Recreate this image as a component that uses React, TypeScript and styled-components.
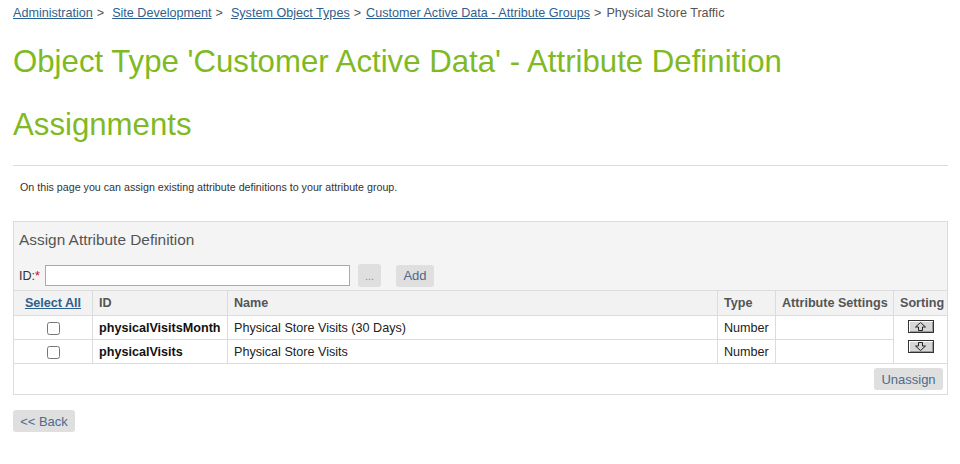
import React from "react";
import styled, { createGlobalStyle } from "styled-components";

const Global = createGlobalStyle`
  html, body { margin: 0; padding: 0; background: #fff; }
  body { font-family: "Liberation Sans", Arial, sans-serif; color: #333; }
`;

const Page = styled.div`
  padding: 0 12px 0 13px;
`;

const Breadcrumb = styled.div`
  height: 30px;
  padding-top: 6px;
  box-sizing: border-box;
  font-size: 12.6px;
  line-height: 15px;
  color: #555;
  white-space: nowrap;
`;

const Crumb = styled.a`
  color: #2f5f8f;
  text-decoration: underline;
  cursor: pointer;
`;

const Sep = styled.span<{ $wide?: boolean }>`
  margin: 0 ${(p) => (p.$wide ? "8px" : "5px")} 0 4px;
`;

const Title = styled.h1`
  margin: 0;
  font-weight: normal;
  font-size: 31.2px;
  line-height: 63px;
  color: #80b923;
  width: 800px;
`;

const Rule = styled.hr`
  margin: 9px 0 0;
  border: 0;
  border-top: 1px solid #dcdcdc;
  height: 0;
`;

const Intro = styled.p`
  margin: 0;
  padding: 14px 0 0 7px;
  font-size: 10.7px;
  line-height: 15px;
  color: #333;
`;

const Panel = styled.div`
  margin-top: 26px;
`;

const PanelHead = styled.div`
  background: #f4f4f4;
  border: 1px solid #dcdcdc;
  border-bottom: 0;
  padding: 0 5px;
  height: 69px;
  box-sizing: border-box;
`;

const PanelTitle = styled.div`
  font-size: 15.4px;
  line-height: 18px;
  color: #555;
  padding-top: 9px;
  height: 42px;
  box-sizing: border-box;
`;

const IdRow = styled.div`
  display: flex;
  align-items: center;
  height: 23px;
`;

const Label = styled.label`
  font-size: 12.6px;
  color: #333;
  width: 26px;
`;

const Req = styled.span`
  color: #d0021b;
`;

const TextInput = styled.input`
  width: 305px;
  height: 21px;
  box-sizing: border-box;
  border: 1px solid #aaa;
  background: #fff;
  margin: 0;
  padding: 0 4px;
`;

const Btn = styled.button<{ $w: number; $muted?: boolean }>`
  width: ${(p) => p.$w}px;
  height: 22px;
  border: 0;
  border-radius: 3px;
  background: #dfdfdf;
  color: ${(p) => (p.$muted ? "#8a8a8a" : "#4d6a8c")};
  font-family: "Liberation Sans", Arial, sans-serif;
  font-size: 13px;
  padding: 0;
  cursor: pointer;
`;

const IdBrowse = styled(Btn)`
  margin-left: 8px;
  height: 23px;
  font-size: 11px;
`;

const AddBtn = styled(Btn)`
  margin-left: 15px;
`;

const Table = styled.table`
  width: 100%;
  border-collapse: collapse;
  table-layout: fixed;
  font-size: 12.6px;
`;

const Th = styled.th<{ $center?: boolean }>`
  background: #f2f2f2;
  border: 1px solid #dcdcdc;
  height: 24px;
  padding: 0 6px;
  text-align: ${(p) => (p.$center ? "center" : "left")};
  color: #555;
  font-weight: bold;
  white-space: nowrap;
`;

const HeadLink = styled.a`
  color: #2f5f8f;
  text-decoration: underline;
  cursor: pointer;
`;

const Td = styled.td<{ $center?: boolean; $bold?: boolean }>`
  border: 1px solid #dcdcdc;
  height: 23px;
  padding: 0 6px;
  text-align: ${(p) => (p.$center ? "center" : "left")};
  font-weight: ${(p) => (p.$bold ? "bold" : "normal")};
  color: ${(p) => (p.$bold ? "#111" : "#222")};
  white-space: nowrap;
`;

const SortCell = styled.td`
  border: 1px solid #dcdcdc;
  padding: 4px 0 0;
  vertical-align: top;
`;

const SortStack = styled.div`
  display: flex;
  flex-direction: column;
  align-items: center;
  gap: 7px;
`;

const SortBtn = styled.button`
  width: 26px;
  height: 13px;
  padding: 0;
  border: 1px solid #333;
  background: #d6d6d6;
  box-shadow: inset 1px 1px 0 #fff, inset -1px -1px 0 #999;
  display: flex;
  align-items: center;
  justify-content: center;
  cursor: pointer;
`;

const Check = styled.input`
  margin: 0;
  width: 13px;
  height: 13px;
  vertical-align: middle;
`;

const FootCell = styled.td`
  border: 1px solid #dcdcdc;
  height: 30px;
  padding: 0 4px 0 0;
  text-align: right;
`;

const BackRow = styled.div`
  margin-top: 15px;
`;

const Arrow = ({ down }: { down?: boolean }) => (
  <svg width="11" height="9" viewBox="0 0 11 9" style={{ transform: down ? "rotate(180deg)" : undefined }}>
    <path d="M5.5 0.5 L10.5 5 L7.5 5 L7.5 8.5 L3.5 8.5 L3.5 5 L0.5 5 Z" fill="none" stroke="#222" strokeWidth="1" />
  </svg>
);

const rows = [
  { id: "physicalVisitsMonth", name: "Physical Store Visits (30 Days)", type: "Number" },
  { id: "physicalVisits", name: "Physical Store Visits", type: "Number" },
];

export default function App() {
  return (
    <>
      <Global />
      <Page>
        <Breadcrumb>
          <Crumb>Administration</Crumb>
          <Sep $wide>&gt;</Sep>
          <Crumb>Site Development</Crumb>
          <Sep $wide>&gt;</Sep>
          <Crumb>System Object Types</Crumb>
          <Sep>&gt;</Sep>
          <Crumb>Customer Active Data - Attribute Groups</Crumb>
          <Sep>&gt;</Sep>
          Physical Store Traffic
        </Breadcrumb>
        <Title>Object Type 'Customer Active Data' - Attribute Definition Assignments</Title>
        <Rule />
        <Intro>On this page you can assign existing attribute definitions to your attribute group.</Intro>
        <Panel>
          <PanelHead>
            <PanelTitle>Assign Attribute Definition</PanelTitle>
            <IdRow>
              <Label>
                ID:<Req>*</Req>
              </Label>
              <TextInput type="text" />
              <IdBrowse $w={23} $muted>
                ...
              </IdBrowse>
              <AddBtn $w={38}>Add</AddBtn>
            </IdRow>
          </PanelHead>
          <Table>
            <colgroup>
              <col style={{ width: 79 }} />
              <col style={{ width: 135 }} />
              <col />
              <col style={{ width: 58 }} />
              <col style={{ width: 118 }} />
              <col style={{ width: 54 }} />
            </colgroup>
            <thead>
              <tr>
                <Th $center>
                  <HeadLink>Select All</HeadLink>
                </Th>
                <Th>ID</Th>
                <Th>Name</Th>
                <Th>Type</Th>
                <Th>Attribute Settings</Th>
                <Th>Sorting</Th>
              </tr>
            </thead>
            <tbody>
              {rows.map((r, i) => (
                <tr key={r.id}>
                  <Td $center>
                    <Check type="checkbox" />
                  </Td>
                  <Td $bold>{r.id}</Td>
                  <Td>{r.name}</Td>
                  <Td>{r.type}</Td>
                  <Td />
                  {i === 0 && (
                    <SortCell rowSpan={2}>
                      <SortStack>
                        <SortBtn>
                          <Arrow />
                        </SortBtn>
                        <SortBtn>
                          <Arrow down />
                        </SortBtn>
                      </SortStack>
                    </SortCell>
                  )}
                </tr>
              ))}
              <tr>
                <FootCell colSpan={6}>
                  <Btn $w={69}>Unassign</Btn>
                </FootCell>
              </tr>
            </tbody>
          </Table>
        </Panel>
        <BackRow>
          <Btn $w={62}>&lt;&lt; Back</Btn>
        </BackRow>
      </Page>
    </>
  );
}
